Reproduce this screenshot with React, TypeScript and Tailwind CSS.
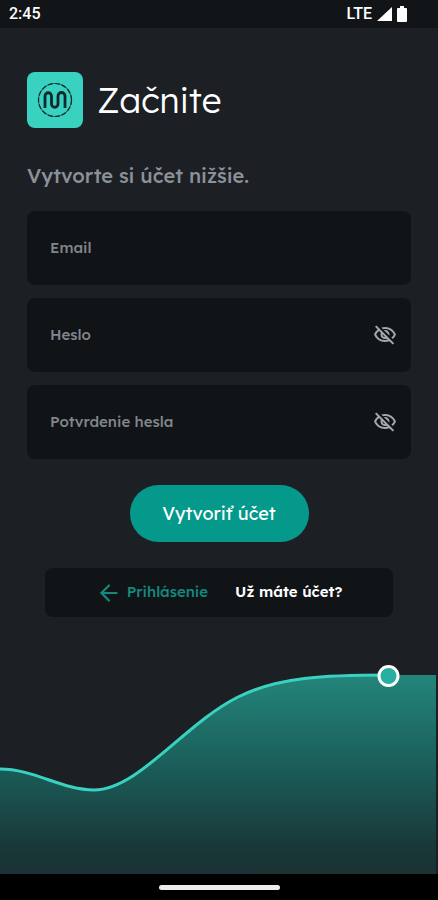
import { useState } from "react";
import { ArrowLeft } from "lucide-react";
import { MdOutlineVisibilityOff, MdOutlineVisibility } from "react-icons/md";

function StatusBar() {
  return (
    <div className="flex h-7 items-center justify-between bg-[#121518] pr-[31px] pl-[9px] font-['Roboto',sans-serif] text-base font-medium text-white">
      <span>2:45</span>
      <div className="flex items-center gap-[5px]">
        <span>LTE</span>
        <svg width="15" height="14" viewBox="0 0 15 14" fill="#fff" aria-hidden="true">
          <path d="M15 0V14H0Z" />
        </svg>
        <svg width="10" height="16" viewBox="0 0 10 16" fill="#fff" aria-hidden="true">
          <path d="M3 0H7V2H9Q10 2 10 3V15Q10 16 9 16H1Q0 16 0 15V3Q0 2 1 2H3Z" />
        </svg>
      </div>
    </div>
  );
}

function Logo() {
  return (
    <svg width="56" height="56" viewBox="0 0 56 56" fill="none" className="shrink-0 rounded-lg bg-[#39d2c0]" aria-hidden="true">
      <circle cx="28" cy="28" r="16.500" stroke="#1f7f78" strokeWidth="1.200" />
      <circle cx="28" cy="28" r="16.500" stroke="#10282a" strokeWidth="1.200" strokeDasharray="5 2" />
      <path
        d="M18 36V24A3.250 3.250 0 0 1 24.500 24V32A3.250 3.250 0 0 0 31 32V24A3.500 3.500 0 0 1 38 24V36"
        stroke="#10282a"
        strokeWidth="2.800"
      />
    </svg>
  );
}

type FieldProps = { id: string; label: string; secret?: boolean };

function Field({ id, label, secret = false }: FieldProps) {
  const [shown, setShown] = useState(false);
  return (
    <div className="flex h-[74px] items-center gap-3 rounded-lg bg-[#111417] pr-[14px] pl-[23px]">
      <label htmlFor={id} className="shrink-0 text-[15px] font-medium text-[#81868c]">
        {label}
      </label>
      <input
        id={id}
        type={secret ? (shown ? "text" : "password") : "email"}
        className="min-w-0 flex-1 bg-transparent text-[15px] text-white outline-none"
      />
      {secret && (
        <button type="button" aria-label="Zobraziť heslo" onClick={() => setShown(!shown)} className="text-[#a6a9ac]">
          {shown ? <MdOutlineVisibility size={24} /> : <MdOutlineVisibilityOff size={24} />}
        </button>
      )}
    </div>
  );
}

function Wave() {
  return (
    <svg viewBox="0 0 438 212" className="mt-auto block h-auto w-full" fill="none" aria-hidden="true">
      <defs>
        <linearGradient id="wave" x1="0" y1="0" x2="0" y2="1">
          <stop offset="0" stopColor="#23857b" />
          <stop offset="0.500" stopColor="#1a5a56" />
          <stop offset="0.850" stopColor="#193939" />
          <stop offset="1" stopColor="#1a3233" />
        </linearGradient>
      </defs>
      <path
        d="M0 107C34 107 62 128 94 128C138 128 184 62 238 35C278 15 325 13 388 13H436V212H0Z"
        fill="url(#wave)"
      />
      <path d="M0 107C34 107 62 128 94 128C138 128 184 62 238 35C278 15 325 13 388 13" stroke="#39d2c0" strokeWidth="3" />
      <circle cx="388.500" cy="14" r="9.500" fill="#27b09f" stroke="#fff" strokeWidth="3" />
    </svg>
  );
}

export default function App() {
  return (
    <div className="flex min-h-screen flex-col bg-[#1c1f24] font-['Lexend','Inter',sans-serif]">
      <StatusBar />
      <main className="flex flex-1 flex-col">
        <div className="px-[27px] pt-11">
          <header className="flex items-center gap-[14px]">
            <Logo />
            <h1 className="text-[35px] leading-10 font-light text-white">Začnite</h1>
          </header>
          <p className="mt-[34px] text-xl leading-7 font-medium text-[#8b9197]">Vytvorte si účet nižšie.</p>
          <form className="mt-[21px] flex flex-col gap-[13px]" onSubmit={(e) => e.preventDefault()}>
            <Field id="email" label="Email" />
            <Field id="password" label="Heslo" secret />
            <Field id="confirm" label="Potvrdenie hesla" secret />
            <button
              type="submit"
              className="mt-[13px] h-[57px] w-[179px] self-center rounded-full bg-[#04998b] text-lg font-normal text-white"
            >
              Vytvoriť účet
            </button>
          </form>
          <div className="mx-[18px] mt-[26px] flex h-[49px] items-center justify-center gap-[27px] rounded-lg bg-[#111417] text-[15px]">
            <a href="#prihlasenie" className="flex items-center gap-[5px] font-medium text-[#14897e]">
              <ArrowLeft size={26} strokeWidth={2} aria-hidden="true" />
              <span>Prihlásenie</span>
            </a>
            <span className="font-semibold text-white">Už máte účet?</span>
          </div>
        </div>
        <Wave />
      </main>
      <div className="flex h-[26px] items-center justify-center bg-black">
        <div className="h-[5px] w-[121px] rounded-full bg-[#ececec]" />
      </div>
    </div>
  );
}
